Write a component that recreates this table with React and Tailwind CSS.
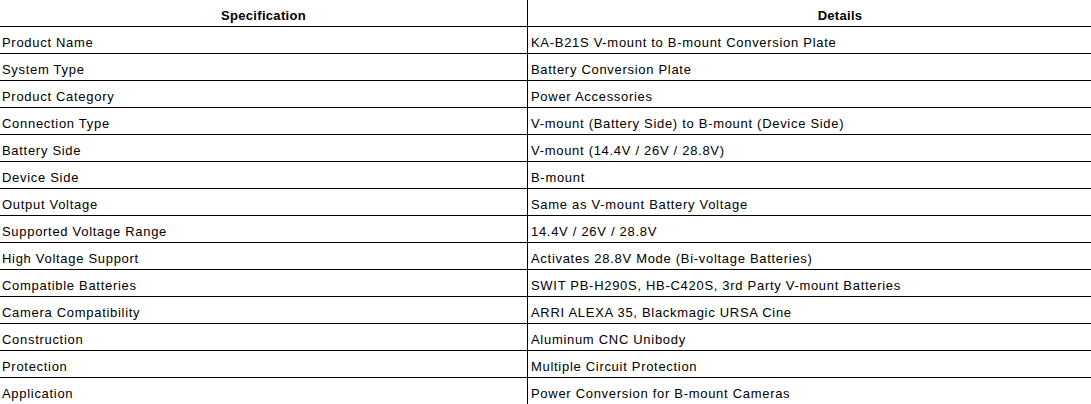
import React from "react";

const rows = [
  ["Product Name", "KA-B21S V-mount to B-mount Conversion Plate"],
  ["System Type", "Battery Conversion Plate"],
  ["Product Category", "Power Accessories"],
  ["Connection Type", "V-mount (Battery Side) to B-mount (Device Side)"],
  ["Battery Side", "V-mount (14.4V / 26V / 28.8V)"],
  ["Device Side", "B-mount"],
  ["Output Voltage", "Same as V-mount Battery Voltage"],
  ["Supported Voltage Range", "14.4V / 26V / 28.8V"],
  ["High Voltage Support", "Activates 28.8V Mode (Bi-voltage Batteries)"],
  ["Compatible Batteries", "SWIT PB-H290S, HB-C420S, 3rd Party V-mount Batteries"],
  ["Camera Compatibility", "ARRI ALEXA 35, Blackmagic URSA Cine"],
  ["Construction", "Aluminum CNC Unibody"],
  ["Protection", "Multiple Circuit Protection"],
  ["Application", "Power Conversion for B-mount Cameras"],
];

export default function App() {
  return (
    <div
      className="w-[1091px] h-[404px] overflow-hidden bg-white text-black text-[13px] leading-[15px]"
      style={{ fontFamily: '"Liberation Sans", Arial, sans-serif' }}
    >
      <div className="w-[1152px] flex flex-col">
        <div className="flex border-b border-black font-bold tracking-[0.3px]">
          <div className="w-[528px] shrink-0 border-r border-black pt-[8px] pb-[3px] text-center">
            Specification
          </div>
          <div className="flex-1 pt-[8px] pb-[3px] text-center">Details</div>
        </div>
        {rows.map(([k, v]) => (
          <div key={k} className="flex border-b border-black tracking-[0.7px]">
            <div className="w-[528px] shrink-0 border-r border-black pt-[8px] pb-[3px] pl-[2px]">
              {k}
            </div>
            <div className="flex-1 pt-[8px] pb-[3px] pl-[3px]">{v}</div>
          </div>
        ))}
      </div>
    </div>
  );
}
